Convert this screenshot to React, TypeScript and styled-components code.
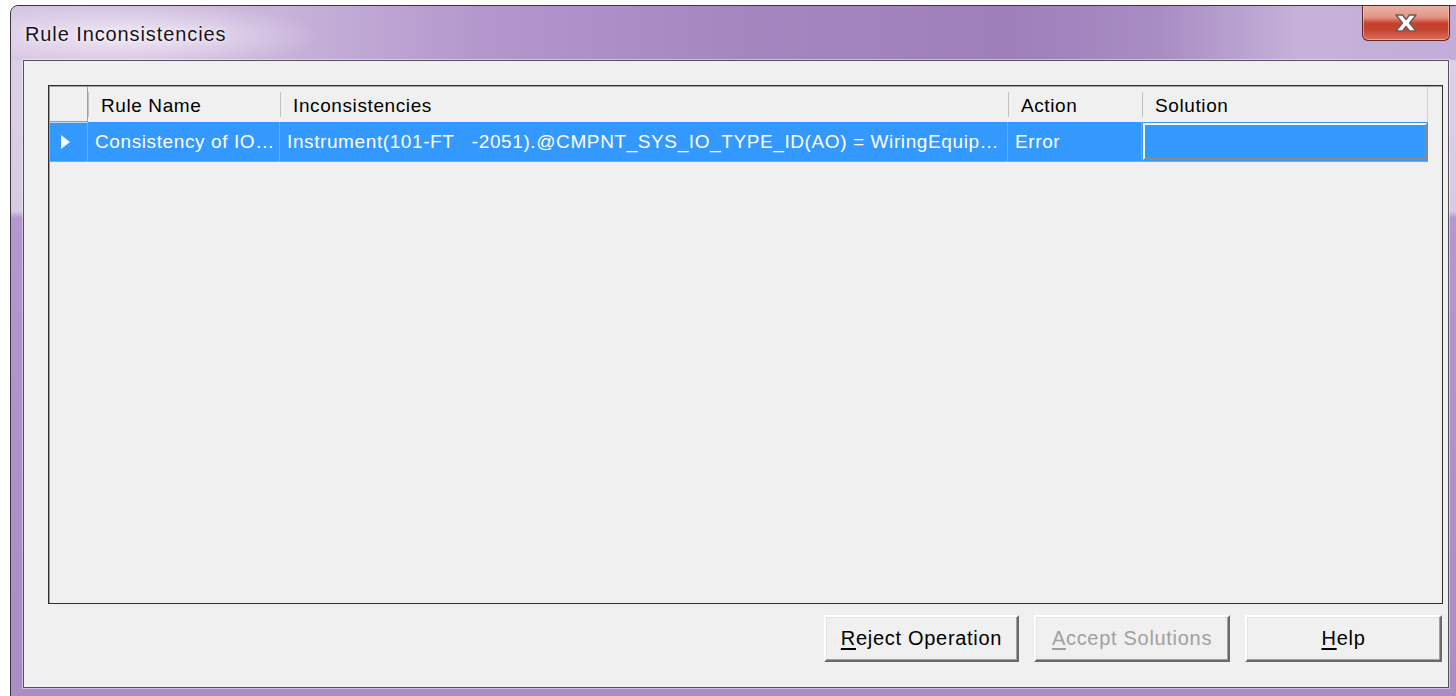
import React from 'react';
import styled, { createGlobalStyle } from 'styled-components';

//----GRID---DATA----//
const columns = [
  { key: 'rule', title: 'Rule Name', width: 192 },
  { key: 'text', title: 'Inconsistencies', width: 728 },
  { key: 'action', title: 'Action', width: 134 },
  { key: 'solution', title: 'Solution', width: 286 },
];

const rows = [
  {
    rule: 'Consistency of IO…',
    text: 'Instrument(101-FT   -2051).@CMPNT_SYS_IO_TYPE_ID(AO) = WiringEquip…',
    action: 'Error',
  },
];

const ROW_HEADER = 38;
const template = `${ROW_HEADER}px ${columns.map((c) => `${c.width}px`).join(' ')}`;

const GlobalStyle = createGlobalStyle`
  html, body {
    margin: 0;
    padding: 0;
    background: #ffffff;
  }
  body {
    font-family: "Liberation Sans", Arial, sans-serif;
    overflow: hidden;
  }
`;

const Page = styled.div`
  width: 1456px;
  height: 696px;
  overflow: hidden;
  padding: 5px 0 0 10px;
  box-sizing: border-box;
`;

const Window = styled.div`
  width: 1452px;
  height: 696px;
  box-sizing: border-box;
  border: 1px solid #3b3540;
  border-radius: 8px 8px 0 0;
  background: linear-gradient(
    180deg,
    #ddd1e8 0,
    #d8cae4 205px,
    #b497cd 212px,
    #aa8cc6 100%
  );
  display: flex;
  flex-direction: column;
  padding: 0 12px 12px 12px;
  position: relative;
  overflow: hidden;
`;

const TitleBar = styled.div`
  height: 54px;
  margin: 0 -12px;
  padding-left: 14px;
  display: flex;
  align-items: center;
  border-radius: 7px 7px 0 0;
  background:
    radial-gradient(ellipse 190px 34px at 120px 30px, rgba(245, 238, 250, 0.85), rgba(245, 238, 250, 0) 100%),
    linear-gradient(
      90deg,
      #d6c6e2 0,
      #c9b4da 260px,
      #b296cc 480px,
      #a587c0 720px,
      #9e7fba 1000px,
      #a88dc3 1150px,
      #c6b2da 1290px,
      #c3acd8 1456px
    );
`;

const Title = styled.span`
  font-size: 20px;
  letter-spacing: 0.9px;
  color: #16121a;
  text-shadow: 0 0 6px rgba(255, 255, 255, 0.9), 0 0 2px rgba(255, 255, 255, 0.9);
  margin-top: 2px;
`;

const CloseButton = styled.div`
  position: absolute;
  top: -1px;
  left: 1351px;
  width: 88px;
  height: 36px;
  box-sizing: border-box;
  border: 1px solid #5c2a24;
  border-top: none;
  border-radius: 0 0 6px 6px;
  background: linear-gradient(
    180deg,
    #eab4ab 0,
    #e39585 35%,
    #c8402e 52%,
    #c44330 70%,
    #dc6f5c 100%
  );
  box-shadow: inset 0 0 0 1px rgba(255, 210, 200, 0.55);
  display: flex;
  align-items: center;
  justify-content: center;
`;

const Client = styled.div`
  flex: 1;
  background: #f0f0f0;
  border: 1px solid #54505a;
  box-shadow: 0 0 0 1px rgba(255, 255, 255, 0.45);
  padding: 24px 5px 0 24px;
  display: flex;
  flex-direction: column;
`;

const Grid = styled.div`
  height: 519px;
  box-sizing: border-box;
  border: 1px solid #2e2e2e;
  box-shadow: inset 1px 1px 0 #a0a0a0;
  background: #f0f0f0;
  padding: 1px 0 0 1px;
`;

const GridRow = styled.div`
  display: grid;
  grid-template-columns: ${template};
`;

const HeaderCell = styled.div<{ $corner?: boolean }>`
  height: 35px;
  box-sizing: border-box;
  display: flex;
  align-items: center;
  padding-left: 13px;
  padding-top: 2px;
  font-size: 19px;
  letter-spacing: 0.6px;
  color: #000;
  position: relative;
  border-right: ${(p) => (p.$corner ? '1px solid #a0a0a0' : 'none')};
  border-bottom: ${(p) => (p.$corner ? '1px solid #a0a0a0' : 'none')};

  &:not(:first-child)::before {
    content: '';
    position: absolute;
    left: 0;
    top: 5px;
    bottom: 5px;
    width: 1px;
    background: #c2c2c2;
  }

  &:last-child {
    border-right: 1px solid #d0d0d0;
  }
`;

const RowHeader = styled.div`
  height: 40px;
  box-sizing: border-box;
  background: #3399ff;
  border-right: 1px solid #a0a0a0;
  border-bottom: 1px solid #a0a0a0;
  border-top: 1px solid #b8d8f8;
  display: flex;
  align-items: center;
  padding-left: 11px;
`;

const Triangle = styled.div`
  width: 0;
  height: 0;
  border-top: 7px solid transparent;
  border-bottom: 7px solid transparent;
  border-left: 9px solid #ffffff;
`;

const Cell = styled.div`
  height: 40px;
  box-sizing: border-box;
  background: #3399ff;
  border-right: 1px solid #a0a0a0;
  border-bottom: 1px solid #a0a0a0;
  display: flex;
  align-items: center;
  padding-left: 7px;
  color: #ffffff;
  font-size: 19px;
  letter-spacing: 0.6px;
  white-space: pre;
  overflow: hidden;
`;

const EditCell = styled.div`
  height: 40px;
  box-sizing: border-box;
  background: #3399ff;
  border-bottom: 1px solid #a0a0a0;
  padding: 1px;
  display: flex;
`;

const EditBox = styled.div`
  flex: 1;
  border-top: 2px solid #ffffff;
  border-left: 2px solid #ffffff;
  border-right: 2px solid #8a8a8a;
  border-bottom: 2px solid #8a8a8a;
  background: #3399ff;
`;

const ButtonBar = styled.div`
  display: flex;
  justify-content: flex-end;
  gap: 15px;
  margin-top: 11px;
  padding-right: 1px;
`;

const Button = styled.button<{ $width: number }>`
  width: ${(p) => p.$width}px;
  height: 47px;
  box-sizing: border-box;
  background: #f0f0f0;
  border: none;
  border-top: 2px solid #ffffff;
  border-left: 2px solid #ffffff;
  border-right: 2px solid #6a6a6a;
  border-bottom: 2px solid #6a6a6a;
  box-shadow: inset -1px -1px 0 #a0a0a0, inset 1px 1px 0 #e3e3e3;
  font-family: "Liberation Sans", Arial, sans-serif;
  font-size: 20px;
  letter-spacing: 0.7px;
  color: #000;
  padding: 0;
  cursor: default;

  &:disabled {
    color: #a0a0a0;
  }

  u {
    text-underline-offset: 3px;
  }
`;

const CloseGlyph: React.FC = () => (
  <svg width="24" height="18" viewBox="0 0 24 18">
    <path
      d="M2 1 H8.5 L12 5.5 L15.5 1 H22 L15.5 9 L22 17 H15.5 L12 12.5 L8.5 17 H2 L8.5 9 Z"
      fill="#ffffff"
      stroke="#6e5a5a"
      strokeWidth="1.4"
      strokeLinejoin="round"
    />
  </svg>
);

const App: React.FC = () => {
  return (
    <>
      <GlobalStyle />
      <Page>
        <Window>
          <TitleBar>
            <Title>Rule Inconsistencies</Title>
          </TitleBar>
          <CloseButton>
            <CloseGlyph />
          </CloseButton>
          <Client>
            <Grid>
              <GridRow>
                <HeaderCell $corner />
                {columns.map((c) => (
                  <HeaderCell key={c.key}>{c.title}</HeaderCell>
                ))}
              </GridRow>
              {rows.map((r, i) => (
                <GridRow key={i}>
                  <RowHeader>
                    <Triangle />
                  </RowHeader>
                  <Cell>{r.rule}</Cell>
                  <Cell>{r.text}</Cell>
                  <Cell>{r.action}</Cell>
                  <EditCell>
                    <EditBox />
                  </EditCell>
                </GridRow>
              ))}
            </Grid>
            <ButtonBar>
              <Button $width={195}>
                <u>R</u>eject Operation
              </Button>
              <Button $width={196} disabled>
                <u>A</u>ccept Solutions
              </Button>
              <Button $width={197}>
                <u>H</u>elp
              </Button>
            </ButtonBar>
          </Client>
        </Window>
      </Page>
    </>
  );
};

export default App;
